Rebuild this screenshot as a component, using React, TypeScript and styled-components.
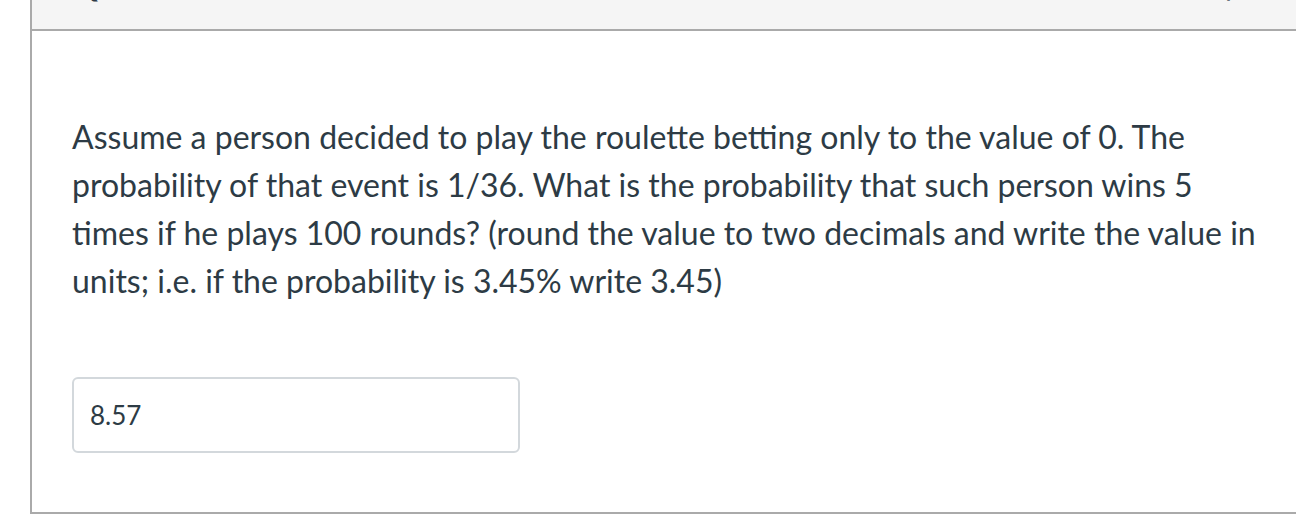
import * as React from 'react'
import styled, { createGlobalStyle } from 'styled-components'

const GlobalStyle = createGlobalStyle`
  html, body {
    margin: 0;
    padding: 0;
    background: #ffffff;
    overflow: hidden;
  }
  body {
    font-family: Lato, "Open Sans", sans-serif;
    color: #2d3b45;
  }
`

export default function App() {
  return (
    <>
      <GlobalStyle />
      <Panel>
        <Header>
          <Title>Question 5</Title>
          <Points>1 pts</Points>
        </Header>
        <Body>
          <QuestionText>
            Assume a person decided to play the roulette betting only to the value of 0. The probability of
            that event is 1/36. What is the probability that such person wins 5 times if he plays 100 rounds?
            (round the value to two decimals and write the value in units; i.e. if the probability is 3.45%
            write 3.45)
          </QuestionText>
          <Answer type="text" defaultValue="8.57" />
        </Body>
      </Panel>
    </>
  )
}

/* the page is scrolled a little, so the top of the question panel sits above the window */
const Panel = styled.div`
  margin: -42px 0 0 30px;
  width: 1272px;
  border: 2px solid #aaaaaa;
  background: #ffffff;
`

const Header = styled.div`
  height: 49px;
  padding: 0 41px 20px 40px;
  display: flex;
  align-items: center;
  justify-content: space-between;
  background: #f5f5f5;
  border-bottom: 2px solid #aaaaaa;
`

const Title = styled.h2`
  margin: 0;
  font-size: 32px;
  font-weight: 700;
  line-height: 1;
  color: #2d3b45;
`

const Points = styled.div`
  font-size: 28px;
  line-height: 1;
  color: #6b7780;
`

const Body = styled.div`
  padding: 82px 40px 59px;
`

const QuestionText = styled.p`
  margin: 0;
  font-size: 32px;
  line-height: 48px;
  color: #2d3b45;
`

const Answer = styled.input`
  display: block;
  box-sizing: border-box;
  margin-top: 72px;
  width: 448px;
  height: 76px;
  padding: 0 16px;
  border: 2px solid #d3d8dc;
  border-radius: 6px;
  font-family: Lato, "Open Sans", sans-serif;
  font-size: 26px;
  color: #2d3b45;
  background: #ffffff;
  outline: none;
`
